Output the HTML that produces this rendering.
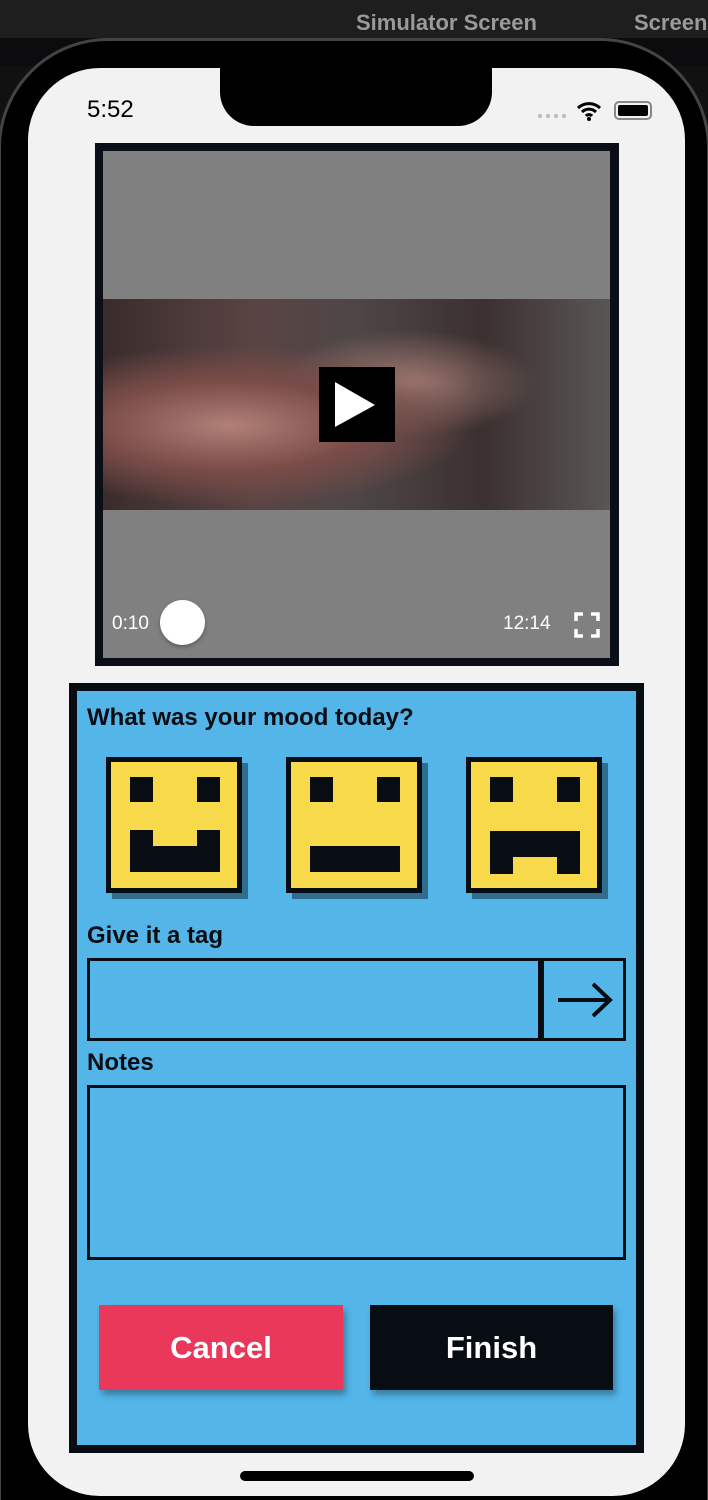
<!DOCTYPE html>
<html style="width:708px;height:1500px;overflow:hidden"><head><meta charset="utf-8"><style>
*{margin:0;padding:0;box-sizing:border-box}
body{width:708px;height:1500px;background:#111;position:relative;overflow:hidden;font-family:"Liberation Sans",sans-serif}
.abs{position:absolute}
.topbar{left:0;top:0;width:708px;height:66px;background:linear-gradient(#1e1e1e 0,#1e1e1e 38px,#0c0c0e 38px)}
.phone{left:-2px;top:38px;width:712px;height:1462px;border-radius:110px 110px 0 0;background:#000;border:3px solid #444;border-bottom:none}
.screen{left:28px;top:68px;width:657px;height:1428px;background:#f2f2f2;border-radius:72px}
.notch{left:220px;top:60px;width:272px;height:66px;background:#000;border-radius:0 0 34px 34px}
.face{width:136px;height:136px;background:#f8d94a;border:5px solid #080d14;box-shadow:6px 6px 0 #2f6d8e}
.face div{position:absolute;background:#080d14}
.lbl{font-weight:bold;color:#080d14;font-size:24px}
</style></head><body>
<div class="abs topbar"></div>
<div class="abs" style="left:356px;top:10px;color:#9a9a9a;font-weight:bold;font-size:22px">Simulator Screen</div>
<div class="abs" style="left:634px;top:10px;color:#9a9a9a;font-weight:bold;font-size:22px;white-space:nowrap">Screen</div>
<div class="abs phone"></div>
<div class="abs screen"></div>
<div class="abs notch"></div>
<div class="abs" style="left:87px;top:96px;font-size:24px;color:#000">5:52</div>
<div class="abs" style="left:538px;top:114px;width:28px;height:4px;border-top:4px dotted #bbb"></div>
<svg class="abs" style="left:576px;top:100px" width="26" height="22" viewBox="0 0 26 22"><path d="M2 8a16 16 0 0 1 22 0M6 12a10 10 0 0 1 14 0M10 16a4 4 0 0 1 6 0" stroke="#000" stroke-width="3" fill="none"/><circle cx="13" cy="19" r="2" fill="#000"/></svg>
<div class="abs" style="left:614px;top:101px;width:38px;height:19px;border:2px solid #888;border-radius:5px;padding:2px"><div style="width:100%;height:100%;background:#000;border-radius:2px"></div></div>
<div class="abs" style="left:95px;top:143px;width:524px;height:523px;background:#0a0f17"></div>
<div class="abs" style="left:103px;top:151px;width:507px;height:507px;background:#808080"></div>
<div class="abs" style="left:103px;top:299px;width:507px;height:211px;background:radial-gradient(ellipse at 25% 60%,#b08078 0,#7a4c48 25%,transparent 45%),radial-gradient(ellipse at 60% 40%,#a07870 0,transparent 30%),linear-gradient(90deg,#3a2c2c,#5a4444 30%,#4e4646 50%,#3c3030 75%,#5a5656)"></div>
<div class="abs" style="left:319px;top:367px;width:76px;height:75px;background:#000"></div>
<svg class="abs" style="left:319px;top:367px" width="76" height="75"><path d="M16 15L56 38L16 60Z" fill="#fff"/></svg>
<div class="abs" style="left:112px;top:613px;color:#fff;font-size:19px">0:10</div>
<div class="abs" style="left:160px;top:600px;width:45px;height:45px;border-radius:50%;background:#fff;box-shadow:0 2px 4px rgba(0,0,0,.3)"></div>
<div class="abs" style="left:503px;top:613px;color:#fff;font-size:19px">12:14</div>
<svg class="abs" style="left:574px;top:612px" width="26" height="26"><path d="M2 9V2h7M17 2h7v7M24 17v7h-7M9 24H2v-7" stroke="#fff" stroke-width="3.5" fill="none"/></svg>
<div class="abs" style="left:69px;top:683px;width:575px;height:770px;background:#53b5e8;border:8px solid #080d14"></div>
<div class="abs lbl" style="left:87px;top:704px">What was your mood today?</div>
<div class="abs face" style="left:106px;top:757px"><div style="left:19px;top:15px;width:23px;height:25px"></div><div style="left:86px;top:15px;width:23px;height:25px"></div><div style="left:19px;top:68px;width:90px;height:42px"></div><div style="left:42px;top:63px;width:44px;height:21px;background:#f8d94a"></div></div>
<div class="abs face" style="left:286px;top:757px"><div style="left:19px;top:15px;width:23px;height:25px"></div><div style="left:86px;top:15px;width:23px;height:25px"></div><div style="left:19px;top:84px;width:90px;height:26px"></div></div>
<div class="abs face" style="left:466px;top:757px"><div style="left:19px;top:15px;width:23px;height:25px"></div><div style="left:86px;top:15px;width:23px;height:25px"></div><div style="left:19px;top:69px;width:90px;height:43px"></div><div style="left:42px;top:95px;width:44px;height:20px;background:#f8d94a"></div></div>
<div class="abs lbl" style="left:87px;top:922px">Give it a tag</div>
<div class="abs" style="left:87px;top:958px;width:539px;height:83px;border:3px solid #080d14"></div>
<div class="abs" style="left:538px;top:958px;width:6px;height:83px;background:#080d14"></div>
<svg class="abs" style="left:555px;top:980px" width="60" height="40"><path d="M3 20H55M38 4L55 20L38 36" stroke="#080d14" stroke-width="4" fill="none"/></svg>
<div class="abs lbl" style="left:87px;top:1049px">Notes</div>
<div class="abs" style="left:87px;top:1085px;width:539px;height:175px;border:3px solid #080d14"></div>
<div class="abs" style="left:99px;top:1305px;width:244px;height:85px;background:#e9385a;box-shadow:3px 5px 6px rgba(0,0,0,.3);color:#fff;font-weight:bold;font-size:31px;text-align:center;line-height:85px">Cancel</div>
<div class="abs" style="left:370px;top:1305px;width:243px;height:85px;background:#080d14;box-shadow:3px 5px 6px rgba(0,0,0,.3);color:#fff;font-weight:bold;font-size:31px;text-align:center;line-height:85px">Finish</div>
<div class="abs" style="left:240px;top:1471px;width:234px;height:10px;border-radius:5px;background:#000"></div>
</body></html>
